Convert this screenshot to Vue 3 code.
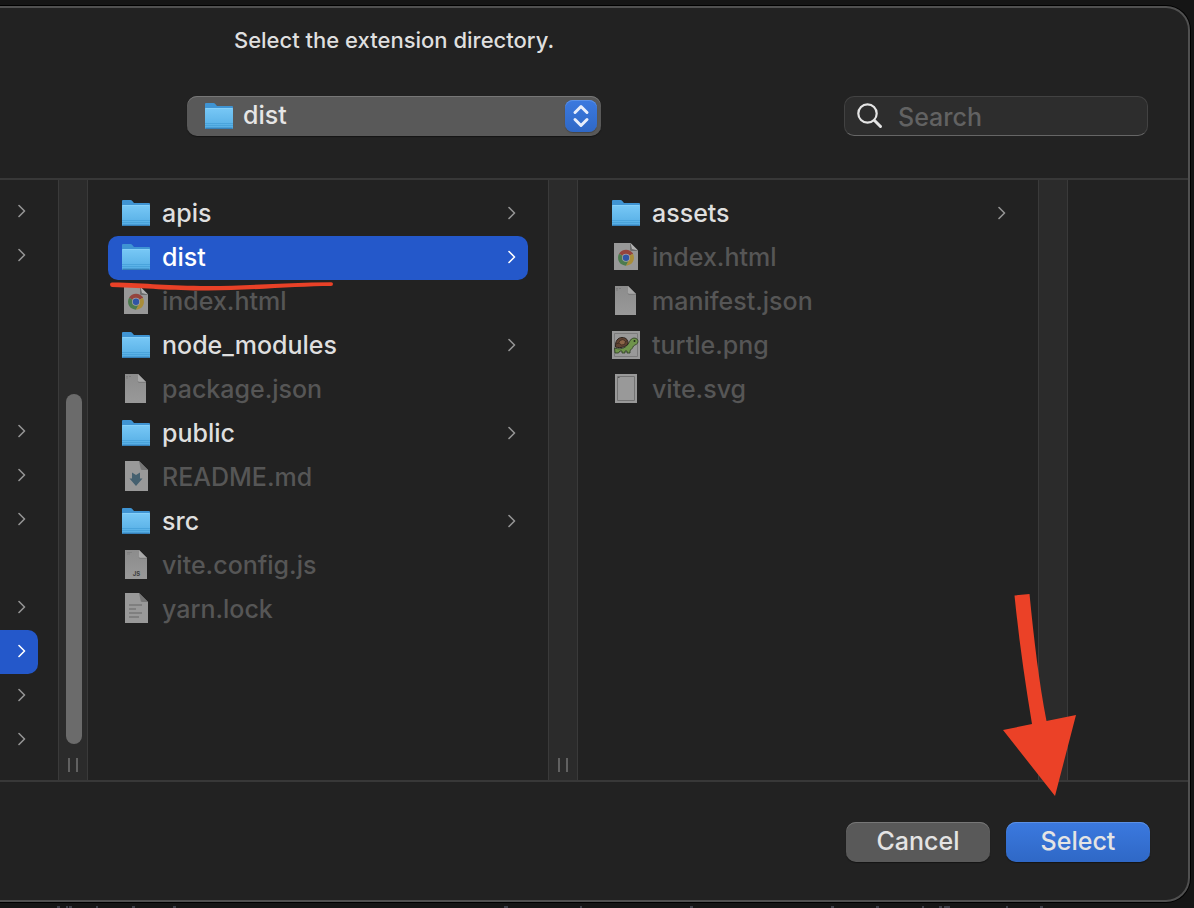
<script setup>
import { ref } from 'vue'

const parentRows = ['open', 'open', '', '', '', 'open', 'open', 'open', '', 'open', 'selected', 'open', 'open']

const columns = [
  {
    name: 'Project',
    grip: true,
    items: [
      { name: 'apis', kind: 'folder' },
      { name: 'dist', kind: 'folder', selected: true },
      { name: 'index.html', kind: 'chrome' },
      { name: 'node_modules', kind: 'folder' },
      { name: 'package.json', kind: 'blank' },
      { name: 'public', kind: 'folder' },
      { name: 'README.md', kind: 'markdown' },
      { name: 'src', kind: 'folder' },
      { name: 'vite.config.js', kind: 'script' },
      { name: 'yarn.lock', kind: 'text' }
    ]
  },
  {
    name: 'dist',
    grip: false,
    items: [
      { name: 'assets', kind: 'folder' },
      { name: 'index.html', kind: 'chrome' },
      { name: 'manifest.json', kind: 'blank' },
      { name: 'turtle.png', kind: 'turtle' },
      { name: 'vite.svg', kind: 'vector' }
    ]
  }
]

const directory = ref('dist')
const query = ref('')
</script>

<template>
  <div class="page">
    <svg width="0" height="0" class="defs" aria-hidden="true">
      <defs>
        <linearGradient id="folder-front" x1="0" y1="0" x2="0" y2="1">
          <stop offset="0" stop-color="#78c8f6" />
          <stop offset="1" stop-color="#54ade4" />
        </linearGradient>
        <linearGradient id="paper" x1="0" y1="0" x2="0" y2="1">
          <stop offset="0" stop-color="#8c8c8c" />
          <stop offset="1" stop-color="#999" />
        </linearGradient>
        <symbol id="icon-folder" viewBox="0 0 32 32">
          <path d="M2 4q0-1 1-1h7.500q1 0 1.800 1l1.200 1.500q.5.500 1.500.5h14q1 0 1 1v21H2z" fill="#3f94d3" />
          <path d="M2 9q0-1 1-1h26q1 0 1 1v19q0 1-1 1H3q-1 0-1-1z" fill="url(#folder-front)" />
          <path d="M2.500 8.500h27" stroke="#86d0f9" />
          <path d="M2 23.500h28M2 25.500h28" stroke="#459fd8" stroke-width=".8" />
          <path d="M2.500 28.300h27" stroke="#357fb8" stroke-width="1.400" />
        </symbol>
        <symbol id="icon-chrome" viewBox="0 0 32 32">
          <path d="M4 2h16.500L28 9.500V29H4z" fill="#989898" />
          <path d="M20 2l8 8h-6.500Q20 10 20 8.500z" fill="#6d6d6d" />
          <path d="M20.500 2l7.500 7.500-6-1.500z" fill="#b2b2b2" />
          <path d="M16 16.700L9.100 12.700A8 8 0 0 1 22.900 12.700z" fill="#94443d" />
          <path d="M16 16.700L9.100 12.700A8 8 0 0 0 16 24.700l3.500-6z" fill="#4c7b4e" />
          <path d="M16 16.700l6.900-4A8 8 0 0 1 16 24.700l3-6z" fill="#a98d3a" />
          <path d="M16 12.700h7a8 8 0 0 0-.5-1H16z" fill="#94443d" />
          <circle cx="16" cy="16.700" r="4" fill="#a5a5a5" />
          <circle cx="16" cy="16.700" r="3.200" fill="#2f55a5" />
        </symbol>
        <symbol id="icon-blank" viewBox="0 0 32 32">
          <path d="M5 1h13l8 8v21H5z" fill="url(#paper)" />
          <path d="M18 1l8 8h-7q-1 0-1-1z" fill="#a8a8a8" />
          <path d="M18 8.500q0 .8 1 .8h7" fill="none" stroke="#747474" stroke-width=".8" />
          <path d="M6 3.500h2m1 0h2M6 5h2" stroke="#777" stroke-width=".8" />
        </symbol>
        <symbol id="icon-markdown" viewBox="0 0 32 32">
          <path d="M5 0h14l9 9v21H5z" fill="#999" />
          <path d="M19 0l9 9h-6q-1.500 0-1.500-2z" fill="#777" />
          <path d="M12 11.500l4 2.500 4-2.500v6h2.500L16 25l-6.500-7.500H12z" fill="#45606f" />
        </symbol>
        <symbol id="icon-script" viewBox="0 0 32 32">
          <path d="M5 1h14l8 8v21H5z" fill="url(#paper)" />
          <path d="M19 1l8 8h-7q-1 0-1-1z" fill="#aaa" />
          <path d="M19 8.500q0 .8 1 .8h7" fill="none" stroke="#777" stroke-width=".8" />
          <path d="M7 3.500h5M7 5h3" stroke="#7b7b7b" stroke-width=".7" />
          <text x="16.500" y="27" text-anchor="middle" font-family="Inter, sans-serif" font-size="6" font-weight="700" fill="#3e3e3e">JS</text>
        </symbol>
        <symbol id="icon-text" viewBox="0 0 32 32">
          <path d="M5 0h14l9 9v21H5z" fill="#999" />
          <path d="M19 0l9 9h-6q-1.500 0-1.500-2z" fill="#777" />
          <path d="M9 12h13M9 16h7M9 20h13M9 24h10" stroke="#777" stroke-width="1.500" />
        </symbol>
        <symbol id="icon-turtle" viewBox="0 0 32 32">
          <path d="M2 2h28v28H2z" fill="#999" />
          <path d="M4.500 4.500h23v23h-23z" fill="none" stroke="#7b7b7b" />
          <path d="M4.500 19c4 1.500 9 1 12-2 2-2 3-4.500 4-6 2-3 7.500-2.500 7.500 1.500 0 3-3 3-4.500 4.500-1 2-1.500 3-3.500 4.500v2.500h-3v-2h-2v2h-3V22h-2l-1.500 2H5z" fill="#6f944b" stroke="#29371f" stroke-width=".8" />
          <path d="M5.500 18C5 12 8 8.500 12 8.500c4.500 0 6.500 3 6 6.500-2.500 3-7.500 4.500-12.500 3z" fill="#614333" stroke="#2d2520" />
          <path d="M10 11.500l3-1 2.500 2-1 3-3.500.5-2-2.500zM9 14l-3 1M15.500 12.500l2-1" fill="#8c6548" stroke="#33261e" stroke-width=".7" />
          <circle cx="24.500" cy="12" r="1" fill="#202a19" />
        </symbol>
        <symbol id="icon-vector" viewBox="0 0 32 32">
          <path d="M5 1h22v29H5z" fill="#999" />
          <path d="M7.500 3.500h17v24h-17z" fill="none" stroke="#737373" />
          <path d="M8 4h1.500v1H8z" fill="#555" />
        </symbol>
        <symbol id="icon-chevron" viewBox="0 0 8 14">
          <path d="M1 1.500L6.500 7 1 12.500" fill="none" stroke="currentColor" stroke-width="1.600" stroke-linecap="round" stroke-linejoin="round" />
        </symbol>
      </defs>
    </svg>

    <main class="dialog" role="dialog" aria-labelledby="dialog-title">
      <header class="toolbar">
        <h1 id="dialog-title" class="title">Select the extension directory.</h1>
        <div class="controls">
          <div class="picker">
            <select v-model="directory" class="picker-select" aria-label="Current directory">
              <option value="dist">dist</option>
            </select>
            <svg class="picker-icon" aria-hidden="true"><use href="#icon-folder" /></svg>
            <span class="picker-arrows" aria-hidden="true">
              <svg viewBox="0 0 32 32">
                <path d="M10 12.500l6-6 6 6M10 19.500l6 6 6-6" fill="none" stroke="#e8eefb" stroke-width="3" stroke-linecap="round" stroke-linejoin="round" />
              </svg>
            </span>
          </div>
          <label class="search">
            <svg viewBox="0 0 28 28" class="search-icon" aria-hidden="true">
              <circle cx="11.500" cy="11.500" r="9.200" fill="none" stroke="#e4e4e4" stroke-width="2.200" />
              <path d="M18.500 18.500l6 6" stroke="#e4e4e4" stroke-width="3" stroke-linecap="round" />
            </svg>
            <input v-model="query" class="search-input" type="text" placeholder="Search" aria-label="Search" />
          </label>
        </div>
      </header>

      <section class="browser">
        <div class="parent">
          <template v-for="(state, index) in parentRows" :key="index">
            <button v-if="state" type="button" class="row parent-row" :class="{ selected: state === 'selected' }" aria-label="Open folder">
              <svg class="chevron" aria-hidden="true"><use href="#icon-chevron" /></svg>
            </button>
            <div v-else class="parent-gap"></div>
          </template>
        </div>
        <div class="splitter">
          <span class="thumb"></span>
          <span class="grip"></span>
        </div>

        <template v-for="column in columns" :key="column.name">
          <ul class="column" :aria-label="column.name">
            <li v-for="item in column.items" :key="item.name" class="entry">
              <button type="button" class="row" :class="{ selected: item.selected }" :disabled="item.kind !== 'folder'">
                <svg class="icon" aria-hidden="true"><use :href="'#icon-' + item.kind" /></svg>
                <span class="name">{{ item.name }}</span>
                <svg v-if="item.kind === 'folder'" class="chevron" aria-hidden="true"><use href="#icon-chevron" /></svg>
              </button>
              <svg v-if="item.selected" class="underline" viewBox="0 0 226 12" aria-hidden="true">
                <path d="M4 2.500Q2 2.500 2 4.500T4 7C40 8 60 10.500 100 10.500S190 6 223 6Q225 6 225 4T223 2.200C180 2.500 140 6 100 6S40 3 4 2.500z" fill="#e94127" />
              </svg>
            </li>
          </ul>
          <div class="splitter">
            <span v-if="column.grip" class="grip"></span>
          </div>
        </template>

        <svg class="arrow" viewBox="0 0 74 202" aria-hidden="true">
          <path d="M11.500 1.500L26.500 0C31 46 36 88 43.500 127L73 121 52 202 0 136 29 130C22 88 16 46 11.500 1.500z" fill="#eb4127" />
        </svg>
      </section>

      <footer class="actions">
        <button type="button" class="button">Cancel</button>
        <button type="button" class="button primary">Select</button>
      </footer>
    </main>

    <svg class="backdrop" viewBox="0 0 1194 2" aria-hidden="true">
      <path d="M57 1h3M66 1h2M69 1h3M96 1h2M132 1h3M173 1h3M504 1h4M580 1h2M690 1h3M831 1h3M876 1h3M922 1h2M939 1h3M944 1h6M1006 1h2M1040 1h3" stroke="#3f414a" stroke-width="2" />
    </svg>
  </div>
</template>

<style>
body {
  margin: 0;
  background: #151515;
}
</style>

<style scoped>
.page {
  position: relative;
  box-sizing: border-box;
  display: flex;
  min-height: 100vh;
  padding: 6px 4px 6px 0;
  background: #151515;
  color: #dfdfdf;
  font-family: Inter, "Liberation Sans", sans-serif;
  font-size: 25px;
  font-weight: 500;
}

.page *,
.page *::before {
  box-sizing: border-box;
}

.defs {
  position: absolute;
}

.backdrop {
  position: absolute;
  left: 0;
  bottom: 0;
  width: 100%;
  height: 2px;
}

.dialog {
  flex: 1;
  min-width: 0;
  display: flex;
  flex-direction: column;
  background: #222;
  border: 2px solid #505050;
  border-left: 0;
  border-radius: 0 24px 24px 0;
  box-shadow: 0 0 0 1px #000;
}

.toolbar {
  display: flex;
  flex-direction: column;
  gap: 40px;
  padding: 16px 40px 42px 187px;
}

.title {
  width: 414px;
  margin: 0;
  font-size: 22px;
  font-weight: 500;
  line-height: 32px;
  text-align: center;
  white-space: nowrap;
}

.controls {
  display: flex;
  justify-content: space-between;
  gap: 24px;
}

.picker {
  position: relative;
  width: 414px;
}

.picker-select {
  appearance: none;
  display: block;
  width: 100%;
  height: 40px;
  margin: 0;
  padding: 0 44px 2px 56px;
  border: 0;
  border-radius: 10px;
  background: #595959;
  box-shadow: inset 0 1px #777, 0 1px 1px #151515;
  color: #e6e6e6;
  font: inherit;
}

.picker-icon {
  position: absolute;
  left: 16px;
  top: 4px;
  width: 32px;
  height: 32px;
  pointer-events: none;
}

.picker-arrows {
  position: absolute;
  right: 4px;
  top: 4px;
  width: 32px;
  height: 32px;
  border-radius: 8px;
  background: linear-gradient(#3b79df, #2f68c6);
  box-shadow: inset 0 1px #5b90e5, 0 1px 1px #444;
  pointer-events: none;
}

.picker-arrows svg {
  display: block;
}

.search {
  display: flex;
  align-items: center;
  gap: 14px;
  width: 304px;
  height: 40px;
  padding: 0 11px;
  border: 1px solid #424242;
  border-bottom-color: #666;
  border-radius: 10px;
  background: #2d2d2d;
}

.search-icon {
  flex: none;
  width: 28px;
  height: 28px;
}

.search-input {
  flex: 1;
  min-width: 0;
  padding: 2px 0 0;
  border: 0;
  outline: 0;
  background: transparent;
  color: #dfdfdf;
  font: inherit;
}

.search-input::placeholder {
  color: #626262;
  opacity: 1;
}

.browser {
  position: relative;
  flex: 1;
  display: flex;
  border-top: 2px solid #383838;
  border-bottom: 2px solid #383838;
}

.parent {
  flex: none;
  width: 58px;
  padding: 10px 20px 0 0;
}

.parent-gap {
  height: 44px;
}

.column {
  flex: none;
  width: 460px;
  margin: 0;
  padding: 12px 20px 0;
  list-style: none;
}

.entry {
  position: relative;
}

.row {
  display: flex;
  align-items: center;
  gap: 10px;
  width: 100%;
  height: 44px;
  margin: 0;
  padding: 0 12px 2px;
  border: 0;
  border-radius: 10px;
  background: transparent;
  color: #dfdfdf;
  font: inherit;
  text-align: left;
}

.row:disabled {
  color: #565656;
}

.row.selected {
  background: #2458ca;
  color: #fff;
}

.parent-row {
  border-radius: 0 10px 10px 0;
}

.icon {
  flex: none;
  width: 32px;
  height: 32px;
}

.name {
  flex: 1;
  min-width: 0;
  white-space: nowrap;
}

.chevron {
  flex: none;
  width: 8px;
  height: 14px;
  margin-left: auto;
  color: #949494;
}

.selected .chevron {
  color: #fff;
}

.splitter {
  flex: none;
  display: flex;
  flex-direction: column;
  align-items: center;
  justify-content: flex-end;
  gap: 14px;
  width: 30px;
  padding-bottom: 8px;
  border: 1px solid #3a3a3a;
  border-width: 0 1px;
  background: #2b2b2b;
}

.thumb {
  width: 16px;
  height: 350px;
  margin-left: 2px;
  border-radius: 8px;
  background: #6b6b6b;
}

.grip {
  width: 10px;
  height: 14px;
  border: 2px solid #616161;
  border-width: 0 2px;
}

.underline {
  position: absolute;
  z-index: 1;
  left: 0;
  top: 44px;
  width: 226px;
  height: 12px;
}

.arrow {
  position: absolute;
  z-index: 1;
  right: 111px;
  bottom: -16px;
  width: 74px;
  height: 202px;
}

.actions {
  display: flex;
  justify-content: flex-end;
  gap: 16px;
  padding: 40px 38px 38px;
}

.button {
  width: 144px;
  height: 40px;
  padding: 0 0 2px;
  border: 0;
  border-radius: 10px;
  background: #595959;
  box-shadow: inset 0 1px #777, 0 1px 1px #151515;
  color: #e4e4e4;
  font: inherit;
}

.button.primary {
  background: linear-gradient(#3b79df, #2f68c6);
  box-shadow: inset 0 1px #5b90e5, 0 1px 1px #151515;
}
</style>
